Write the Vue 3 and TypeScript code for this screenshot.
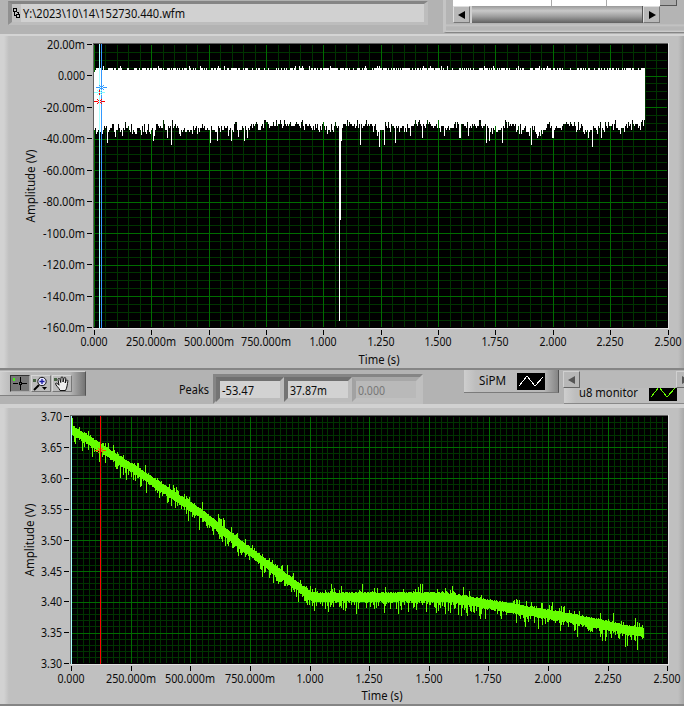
<script setup lang="ts">
interface Tick { pos: number; label: string }
interface Plot { x: number; y: number; w: number; h: number }

function makeRandom(seed: number): () => number {
  let s = seed
  return () => {
    s = (s * 1664525 + 1013904223) % 4294967296
    return s / 4294967296
  }
}

function gridPath(p: Plot, xCells: number, yCells: number): string {
  let d = ''
  for (let i = 0; i <= xCells; i++) {
    d += `M${Math.min(p.x + p.w - 1, Math.round(p.x + (i * (p.w - 0.5)) / xCells)) + 0.5} ${p.y}v${p.h}`
  }
  for (let i = 0; i <= yCells; i++) {
    d += `M${p.x} ${Math.min(p.y + p.h - 1, Math.round(p.y + (i * (p.h - 0.5)) / yCells)) + 0.5}h${p.w}`
  }
  return d
}

function ticks(labels: string[], start: number, length: number): Tick[] {
  return labels.map((label, i) => ({
    label,
    pos: Math.round(start + (i * length) / (labels.length - 1)) + 0.5,
  }))
}

/* Cursor marker: two horizontal arms and four diagonal ones around an open centre. */
function star(cx: number, cy: number): string {
  let d = `M${cx - 5} ${cy + 0.5}h4M${cx + 2} ${cy + 0.5}h4`
  for (const k of [1, 2]) {
    d += `M${cx - k} ${cy - k + 0.5}h1M${cx + k} ${cy - k + 0.5}h1M${cx - k} ${cy + k + 0.5}h1M${cx + k} ${cy + k + 0.5}h1`
  }
  return d
}

const times = ['0.000', '250.000m', '500.000m', '750.000m', '1.000', '1.250', '1.500', '1.750', '2.000', '2.250', '2.500']

/* Coordinates are relative to each panel, which begin at y = 34 and y = 404. */
const top: Plot = { x: 94, y: 10, w: 574, h: 284 }
const low: Plot = { x: 71, y: 12, w: 597, h: 248 }

const topX = ticks(times, 94, 573.5)
const topY = ticks(['20.00m', '0.000', '-20.00m', '-40.00m', '-60.00m', '-80.00m', '-100.0m', '-120.0m', '-140.0m', '-160.0m'], 10, 283.4)
const lowX = ticks(times, 71, 596.4)
const lowY = ticks(['3.70', '3.65', '3.60', '3.55', '3.50', '3.45', '3.40', '3.35', '3.30'], 12, 247.3)

const spikes: Record<number, number> = {
  107: 143, 115: 137, 122: 136, 141: 135, 153: 141, 167: 138, 171: 145, 210: 143, 217: 141,
  231: 141, 238: 137, 244: 141, 247: 138, 340: 220, 339: 321, 341: 141, 360: 145, 379: 147,
  384: 145, 395: 143, 410: 136, 422: 138, 459: 138, 460: 138, 468: 136, 486: 143, 489: 141,
  502: 143, 531: 145, 537: 138, 552: 138, 553: 138, 588: 138, 592: 147, 601: 138,
}

function sipmPath(): string {
  const r = makeRandom(73)
  let d = ''
  let drift = 128
  for (let x = 94; x < 645; x++) {
    const a = r()
    const peak = a > 0.975 ? 66 : a > 0.46 ? 68 : 70
    const t = x < 95 ? 72 : peak
    drift = Math.max(124, Math.min(131, drift + (r() - 0.5) * 5))
    const b = r()
    const jump = b > 0.88 ? 4 : b < 0.14 ? -5 : (r() - 0.5) * 5
    const end = spikes[x] ?? Math.max(119, Math.round((drift + jump) / 2) * 2)
    d += `M${x + 0.5} ${t - 34}V${end - 34}`
  }
  return d
}

function monitorPath(): string {
  const r = makeRandom(421)
  const knots = [[71, 430], [82, 436], [110, 454], [130, 467], [200, 513], [250, 552], [312, 597], [445, 597], [500, 606], [570, 618], [644, 633]]
  let d = ''
  let k = 0
  for (let x = 71; x < 644; x++) {
    while (x > knots[k + 1][0]) k++
    const [x0, y0] = knots[k]
    const [x1, y1] = knots[k + 1]
    const mid = y0 + ((x - x0) / (x1 - x0)) * (y1 - y0)
    const a = r()
    const b = r()
    const up = a > 0.76 ? 1 + r() * (a > 0.9 ? 9 : 5) : r() * 1.2
    const down = b > 0.5 ? 1 + r() * (b > 0.78 ? 13 : 7) : r() * 2
    d += `M${x + 0.5} ${Math.round(mid - 4 - up) - 404}V${Math.round(mid + 4 + down) - 404}`
  }
  return d
}

const charts = [
  {
    id: 'sipm', height: 336, plot: top, xt: topX, yt: topY, grid: [50, 36], major: [10, 9],
    trace: sipmPath(), labelX: 85, tickX: 87, xLabelY: 312, titleX: 379, titleY: 330, yTitleY: 152, yTitleX: 35,
  },
  {
    id: 'monitor', height: 302, plot: low, xt: lowX, yt: lowY, grid: [100, 40], major: [10, 8],
    trace: monitorPath(), labelX: 62, tickX: 64, xLabelY: 279, titleX: 382, titleY: 296, yTitleY: 136, yTitleX: 34,
  },
]

const widths: Record<number, number> = { 4: 21, 5: 27, 6: 38, 7: 42, 8: 50 }
const peaks = [
  { value: '-53.47', off: false },
  { value: '37.87m', off: false },
  { value: '0.000', off: true },
]
</script>

<template>
  <main class="window">
    <header class="header">
      <div class="path-frame">
        <div class="path-field">
          <svg class="path-icon" width="9" height="18" viewBox="0 0 9 18" shape-rendering="crispEdges">
            <path d="M1.5 4.5h3v3h-3zM4.5 10.5h3v3h-3zM2.5 7.5v4h2M4.5 8.5h2v2" fill="none" stroke="#000" />
          </svg>
          <svg class="path-text" width="300" height="18"><text x="1" y="14" textLength="162" lengthAdjust="spacingAndGlyphs">Y:\2023\10\14\152730.440.wfm</text></svg>
        </div>
      </div>
      <div class="table-frame">
        <div class="table-main">
          <div class="cells"><i></i><i></i><i></i></div>
          <div class="scroll">
            <span class="arrow"><svg width="8" height="8"><path d="M0 4 7 0V8z" fill="#000" /></svg></span>
            <span class="thumb"></span>
            <span class="arrow"><svg width="8" height="8"><path d="M8 4 1 0V8z" fill="#000" /></svg></span>
          </div>
        </div>
        <div class="corner"></div>
      </div>
    </header>

    <template v-for="(c, n) in charts" :key="c.id">
      <section class="panel" :class="c.id">
        <svg class="chart" width="684" :height="c.height" :viewBox="`0 0 684 ${c.height}`">
          <g shape-rendering="crispEdges">
            <rect :x="c.plot.x - 1" :y="c.plot.y - 1" :width="c.plot.w + 2" :height="c.plot.h + 2" fill="#e2e2e2" />
            <path :d="`M${c.plot.x - 1} ${c.plot.y + c.plot.h}V${c.plot.y - 1}H${c.plot.x + c.plot.w}V${c.plot.y}H${c.plot.x}V${c.plot.y + c.plot.h}z`" fill="#606060" />
            <rect :x="c.plot.x" :y="c.plot.y" :width="c.plot.w" :height="c.plot.h" fill="#000" />
            <path :d="gridPath(c.plot, c.grid[0], c.grid[1])" stroke="#003400" />
            <path :d="gridPath(c.plot, c.major[0], c.major[1])" stroke="#006c00" />
            <path :d="`M${c.plot.x} ${c.plot.y + 0.5}h${c.plot.w}M${c.plot.x} ${c.plot.y + c.plot.h - 0.5}h${c.plot.w}M${c.plot.x + c.plot.w - 0.5} ${c.plot.y}v${c.plot.h}`" stroke="#000" />
            <path :d="c.trace" :stroke="n === 0 ? '#fff' : '#66ff00'" />
            <path v-for="t in c.yt" :key="t.label" :d="`M${c.tickX} ${t.pos}h5`" stroke="#000" />
            <path v-for="t in c.xt" :key="t.label" :d="`M${t.pos} ${c.plot.y + c.plot.h + 2}v5`" stroke="#000" />
          </g>

          <g v-if="n === 0" shape-rendering="crispEdges" fill="none">
            <path d="M99.5 10V294" stroke="#a5ffff" />
            <path d="M101.5 10V294" stroke="#3399ff" />
            <path :d="star(101, 53)" stroke="#3399ff" />
            <path :d="star(99, 58)" stroke="#86ffff" />
            <path d="M99.5 56v2m0 1v2" stroke="#f00" />
            <path :d="star(99, 67)" stroke="#f00" />
          </g>
          <g v-else shape-rendering="crispEdges" fill="none">
            <path d="M71.5 12V260" stroke="#a5ffff" />
            <path d="M100.5 12V260" stroke="#f00" />
            <path :d="star(100, 46)" stroke="#ff4a00" />
          </g>

          <g text-anchor="end">
            <text v-for="t in c.yt" :key="t.label" :x="c.labelX" :y="t.pos + 4" :textLength="widths[t.label.length]" lengthAdjust="spacingAndGlyphs">{{ t.label }}</text>
          </g>
          <g text-anchor="middle">
            <text v-for="t in c.xt" :key="t.label" :x="t.pos - 0.5" :y="c.xLabelY" :textLength="widths[t.label.length]" lengthAdjust="spacingAndGlyphs">{{ t.label }}</text>
            <text :x="c.titleX" :y="c.titleY" textLength="41" lengthAdjust="spacingAndGlyphs">Time (s)</text>
            <text :transform="`translate(${c.yTitleX} ${c.yTitleY}) rotate(-90)`" textLength="73" lengthAdjust="spacingAndGlyphs">Amplitude (V)</text>
          </g>
        </svg>
      </section>

      <div v-if="n === 0" class="toolbar">
        <div class="palette">
          <span class="tool active">
            <svg width="20" height="17" shape-rendering="crispEdges"><path d="M3 3h2v3H3z" fill="#45ef16" /><path d="M3 8.5h5m4 0h5M10.5 2v5m0 3v5M9 7.5h3M9 9.5h3M9 8.5h1m1 0h1" stroke="#000" /></svg>
          </span>
          <span class="tool">
            <svg width="20" height="17"><path d="M2 4h3v3H2z" fill="#476343" /><circle cx="11" cy="6.5" r="4.2" fill="#e5e5ff" stroke="#111" /><path d="M11 4v5M8.5 6.5h5" stroke="#1818a0" stroke-width="1.3" /><path d="m8 10-5 5" stroke="#000" stroke-width="2" /><path d="M11 12h5l-2.5 3z" /></svg>
          </span>
          <span class="tool">
            <svg width="20" height="17"><path d="M2 3h3v3H2z" fill="#476343" /><path d="M8 15.5C7 12.5 3.5 10.5 3.5 8.5c1-1 2 0 3.5 1.7L6 4.5c0-1.4 1.8-1.4 2 0l.7 3L9 3c0-1.5 2-1.5 2 0v4l1-3.7c.3-1.3 2-1 1.8.5L13.2 8l1-2.5c.5-1 1.9-.5 1.6.8-.5 2.7-.6 6.3-2.3 9.2z" fill="#eee" stroke="#111" /></svg>
          </span>
        </div>
        <svg class="peaks-label" width="34" height="20"><text x="0" y="14" textLength="30" lengthAdjust="spacingAndGlyphs">Peaks</text></svg>
        <div class="array">
          <div v-for="p in peaks" :key="p.value" class="cell" :class="{ off: p.off }">
            <svg width="60" height="17"><text x="2" y="14" :textLength="p.value.length === 5 ? 27 : p.value.endsWith('m') ? 37 : 32" lengthAdjust="spacingAndGlyphs">{{ p.value }}</text></svg>
          </div>
        </div>
        <div class="legend first">
          <svg width="95" height="22"><text x="15" y="15" textLength="27" lengthAdjust="spacingAndGlyphs">SiPM</text><path d="M53 3h28v17H53z" /><path d="m55 16 8-10 8 10 8-9" fill="none" stroke="#fff" shape-rendering="crispEdges" /></svg>
        </div>
        <div class="legend-list">
          <div class="list-scroll">
            <span class="arrow pale"><svg width="8" height="8"><path d="M0 4 7 0V8z" fill="#555" /></svg></span>
            <span class="arrow pale"><svg width="8" height="8"><path d="M7 4 1 0V8z" fill="#555" /></svg></span>
          </div>
          <div class="legend second">
            <svg width="120" height="15"><text x="15" y="9" textLength="59" lengthAdjust="spacingAndGlyphs">u8 monitor</text><path d="M85 0h28v13H85z" /><path d="m87 9 8-10 8 10 8-9" fill="none" stroke="#66ff00" shape-rendering="crispEdges" /></svg>
          </div>
        </div>
      </div>
    </template>
  </main>
</template>

<style>
body { background: #b3b3b3; overflow: hidden; }
</style>

<style scoped>
.window { width: 684px; height: 706px; overflow: hidden; background: #b3b3b3; font: 12px "Noto Sans", "Open Sans", sans-serif; }
svg { display: block; }
text { font: 12px "Noto Sans", "Open Sans", sans-serif; fill: #0c0c0c; }
.header { display: flex; height: 34px; }
.path-frame { box-sizing: border-box; width: 420px; height: 24px; margin: 1px 0 0 8px; border: 4px solid; border-width: 3px 4px; border-color: #858585 #bdbdbd #bdbdbd #909090; background: #d1d1d1; }
.path-field { display: flex; height: 18px; }
.path-icon { background: #c2c2c2; }
.path-text { margin-left: 1px; }
.table-frame { box-sizing: border-box; display: flex; width: 241px; height: 33px; margin-left: 15px; padding-left: 7px; border-left: 3px solid #c4c4c4; border-bottom: 1px solid #858585; background: linear-gradient(to bottom, #b4b4b4 24px, #c6c6c6 25px, #b6b6b6 27px, #b6b6b6 30px, #d2d2d2 32px); }
.table-main { width: 207px; }
.cells { display: flex; height: 6px; background: #fff; }
.cells i { box-sizing: border-box; width: 99px; border-right: 1px solid #aaa; }
.cells i:nth-child(2) { width: 55px; }
.cells i:nth-child(3) { width: 53px; border: 0; }
.scroll { display: flex; height: 17px; }
.arrow { box-sizing: border-box; display: flex; flex: none; align-items: center; justify-content: center; width: 17px; height: 17px; border: 1px solid; border-color: #dedede #777 #777 #dedede; background: #b8b8b8; }
.thumb { box-sizing: border-box; flex: 1; border-left: 2px solid #d0d0d0; border-right: 1px solid #555; background: linear-gradient(#999, #c8c8c8 28%, #a0a0a0 60%, #606060); }
.corner { box-sizing: border-box; width: 17px; height: 6px; border-right: 1px solid #555; border-bottom: 1px solid #555; background: #aaa; }
.panel { box-sizing: border-box; background: linear-gradient(to right, #d2d2d2 4px, #c0c0c0 9px, #c0c0c0 678px, #a9a9a9 684px); }
.sipm { height: 336px; border-top: 2px solid #d4d4d4; border-bottom: 2px solid #858585; }
.monitor { height: 302px; border-top: 4px solid #d1d1d1; border-bottom: 2px solid #858585; }
.sipm .chart { margin-top: -2px; }
.monitor .chart { margin-top: -4px; }
.toolbar { display: flex; height: 34px; background: #b3b3b3; }
.palette { box-sizing: border-box; display: flex; gap: 1px; width: 86px; height: 25px; margin-top: 1px; padding: 3px 0 0 10px; border-top: 1px solid #d2d2d2; border-bottom: 1px solid #818181; border-right: 1px solid #555; background: linear-gradient(to right, #cecece, #b9b9b9 12px, #b6b6b6 70px, #747474 85px); }
.tool { box-sizing: border-box; width: 20px; height: 17px; border: 1px solid; border-color: #d6d6d6 #777 #777 #d6d6d6; background: #bcbcbc; }
.tool svg { margin: -1px; }
.active { background: #777; border-color: #333 #aaa #aaa #333; }
.peaks-label { margin: 10px 0 0 93px; }
.array { box-sizing: border-box; display: flex; width: 211px; height: 30px; margin: 4px 0 0; border: 3px solid; border-color: #858585 #bfbfbf #bfbfbf #858585; background: #a5a5a5; }
.cell { box-sizing: border-box; width: 68px; height: 25px; border: 4px solid; border-color: #707070 #bcbcbc #bcbcbc #747474; background: #d2d2d2; }
.cell.off { border-color: #a8a8a8 #c0c0c0 #c0c0c0 #a2a2a2; background: #b9b9b9; }
.off text { fill: #777; }
.legend { background: linear-gradient(to right, #cecece, #bdbdbd 12px); }
.first { box-sizing: border-box; width: 95px; height: 23px; margin-left: 41px; border-bottom: 1px solid #7b7b7b; border-right: 1px solid #555; background: linear-gradient(to right, #cecece, #bdbdbd 12px, #b8b8b8 80px, #858585); }
.legend-list { width: 121px; margin-left: 4px; overflow: hidden; }
.list-scroll { display: flex; justify-content: space-between; width: 130px; height: 17px; margin-top: 1px; background: #b9b9b9; }
.pale { background: #b7b7b7; border-color: #d0d0d0 #666 #666 #d0d0d0; }
.second { width: 120px; height: 15px; margin-left: 1px; border-bottom: 1px solid #888; }
</style>
